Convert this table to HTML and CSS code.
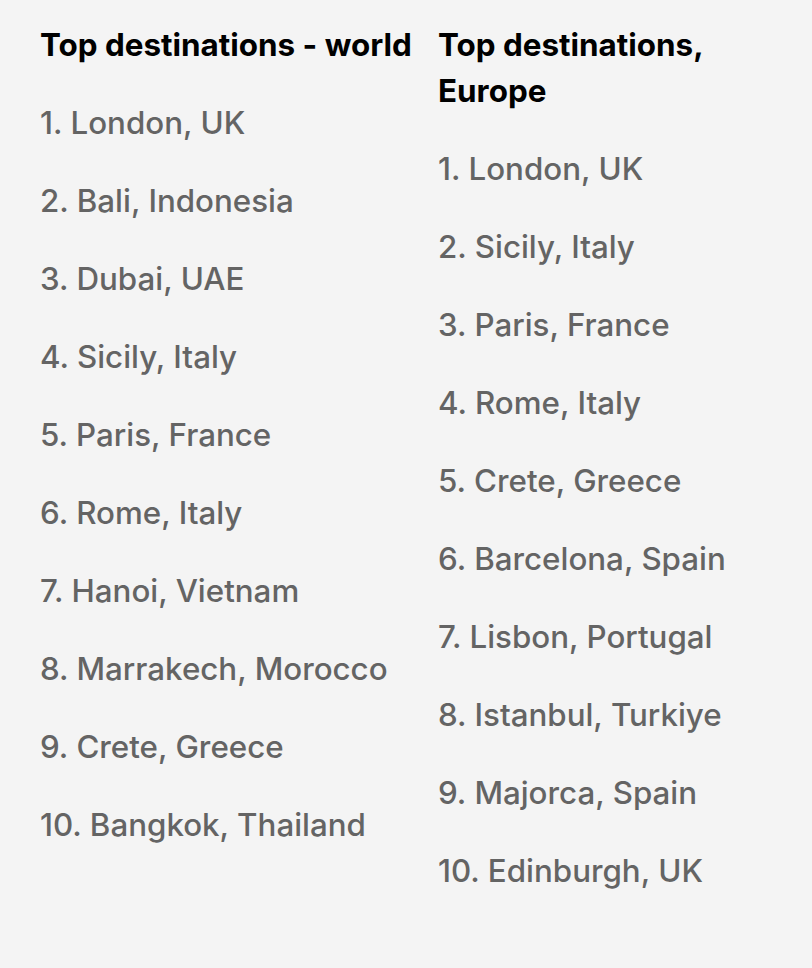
FILE: index.html
```html
<!DOCTYPE html>
<html>
<head>
<meta charset="utf-8">
<link rel="stylesheet" href="styles.css">
</head>
<body>
<div class="page">
  <section class="col">
    <h2 class="title">Top destinations - world</h2>
    <ol class="list">
      <li>1. London, UK</li>
      <li>2. Bali, Indonesia</li>
      <li>3. Dubai, UAE</li>
      <li>4. Sicily, Italy</li>
      <li>5. Paris, France</li>
      <li>6. Rome, Italy</li>
      <li>7. Hanoi, Vietnam</li>
      <li>8. Marrakech, Morocco</li>
      <li>9. Crete, Greece</li>
      <li>10. Bangkok, Thailand</li>
    </ol>
  </section>
  <section class="col">
    <h2 class="title">Top destinations, Europe</h2>
    <ol class="list">
      <li>1. London, UK</li>
      <li>2. Sicily, Italy</li>
      <li>3. Paris, France</li>
      <li>4. Rome, Italy</li>
      <li>5. Crete, Greece</li>
      <li>6. Barcelona, Spain</li>
      <li>7. Lisbon, Portugal</li>
      <li>8. Istanbul, Turkiye</li>
      <li>9. Majorca, Spain</li>
      <li>10. Edinburgh, UK</li>
    </ol>
  </section>
</div>
</body>
</html>
```
FILE: styles.css
```css
html, body {
  margin: 0;
  padding: 0;
  background: #f4f4f4;
}
body {
  font-family: Inter, "Noto Sans", sans-serif;
  width: 812px;
  height: 968px;
}
.page {
  display: grid;
  grid-template-columns: 372px 372px;
  column-gap: 26px;
  padding: 22px 0 0 40px;
}
.title {
  margin: 0;
  font-size: 31.4px;
  font-weight: 700;
  line-height: 46px;
  color: #000;
}
.list {
  list-style: none;
  margin: 0;
  padding: 0;
  display: flex;
  flex-direction: column;
  gap: 32px;
  padding-top: 32px;
}
.list li {
  font-size: 31.3px;
  font-weight: 500;
  line-height: 46px;
  color: #646464;
}
```
